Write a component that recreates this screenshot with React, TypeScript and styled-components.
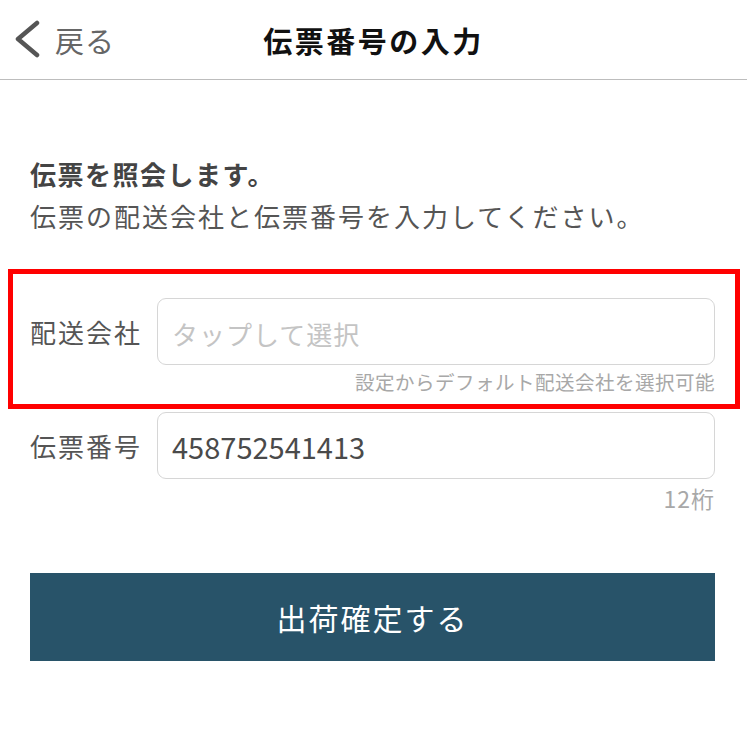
import React from "react";
import styled, { createGlobalStyle } from "styled-components";

const Global = createGlobalStyle`
  html, body { margin: 0; padding: 0; background: #fff; }
  body { font-family: "Noto Sans CJK JP", "Noto Sans", sans-serif; }
  * { box-sizing: border-box; }
`;

const Page = styled.div`
  width: 747px;
  min-height: 737px;
  background: #fff;
`;

const Header = styled.header`
  height: 80px;
  border-bottom: 1px solid #bdbdbd;
  display: grid;
  grid-template-columns: 1fr auto 1fr;
  align-items: center;
`;

const BackButton = styled.button`
  justify-self: start;
  display: flex;
  align-items: center;
  gap: 13px;
  background: none;
  border: none;
  padding: 0 0 0 14px;
  font: inherit;
  font-size: 29px;
  color: #666;
  letter-spacing: 1px;
  cursor: pointer;
`;

const Title = styled.h1`
  margin: 0;
  font-size: 29px;
  font-weight: 700;
  color: #111;
  letter-spacing: 2.5px;
`;

const Content = styled.main`
  padding: 0 32px 0 30px;
`;

const Intro = styled.section`
  margin-top: 73px;
  font-size: 26px;
  line-height: 42px;
  color: #555;
  letter-spacing: 2px;
`;

const IntroStrong = styled.div`
  font-weight: 700;
  color: #444;
  letter-spacing: 1.5px;
`;

const Form = styled.form`
  margin-top: 61px;
  display: flex;
  flex-direction: column;
  gap: 19px;
`;

const FieldGroup = styled.div`
  position: relative;
  display: flex;
  flex-direction: column;
  gap: 6px;
`;

const Highlight = styled.div`
  position: absolute;
  top: -29px;
  left: -22px;
  right: -25px;
  bottom: -16px;
  border: 5px solid #ff0000;
  pointer-events: none;
`;

const Row = styled.div`
  display: grid;
  grid-template-columns: 127px 1fr;
  align-items: center;
`;

const Label = styled.label`
  font-size: 26px;
  color: #555;
  letter-spacing: 2px;
`;

const Input = styled.input`
  height: 67px;
  width: 100%;
  border: 1px solid #d6d6d6;
  border-radius: 9px;
  padding: 0 14px;
  font-family: "Noto Sans CJK JP", "Noto Sans", sans-serif;
  font-size: 29px;
  color: #4a4a4a;
  outline: none;
  background: #fff;
  &::placeholder {
    font-size: 26px;
    color: #c4c4c4;
    letter-spacing: 1px;
  }
`;

const Note = styled.div<{ $size: number }>`
  text-align: right;
  font-size: ${(p) => p.$size}px;
  line-height: 22px;
  color: #a8a8a8;
  letter-spacing: 0.5px;
`;

const CountNote = styled(Note)`
  margin-top: 2px;
  letter-spacing: 1px;
`;

const Submit = styled.button`
  margin-top: 64px;
  width: 100%;
  height: 88px;
  border: none;
  background: #285369;
  color: #fff;
  font-family: "Noto Sans CJK JP", "Noto Sans", sans-serif;
  font-size: 30px;
  letter-spacing: 2px;
  cursor: pointer;
`;

const Chevron = () => (
  <svg width="28" height="40" viewBox="0 0 28 40">
    <polyline
      points="23,3 4,19 23,35"
      fill="none"
      stroke="#555"
      strokeWidth="4.5"
      strokeLinecap="round"
      strokeLinejoin="round"
    />
  </svg>
);

export default function App() {
  return (
    <Page>
      <Global />
      <Header>
        <BackButton type="button">
          <Chevron />
          戻る
        </BackButton>
        <Title>伝票番号の入力</Title>
        <div />
      </Header>
      <Content>
        <Intro>
          <IntroStrong>伝票を照会します。</IntroStrong>
          <div>伝票の配送会社と伝票番号を入力してください。</div>
        </Intro>
        <Form onSubmit={(e) => e.preventDefault()}>
          <FieldGroup>
            <Highlight />
            <Row>
              <Label>配送会社</Label>
              <Input placeholder="タップして選択" readOnly />
            </Row>
            <Note $size={19.5}>設定からデフォルト配送会社を選択可能</Note>
          </FieldGroup>
          <FieldGroup>
            <Row>
              <Label>伝票番号</Label>
              <Input defaultValue="458752541413" />
            </Row>
            <CountNote $size={23}>12桁</CountNote>
          </FieldGroup>
        </Form>
        <Submit type="submit">出荷確定する</Submit>
      </Content>
    </Page>
  );
}
